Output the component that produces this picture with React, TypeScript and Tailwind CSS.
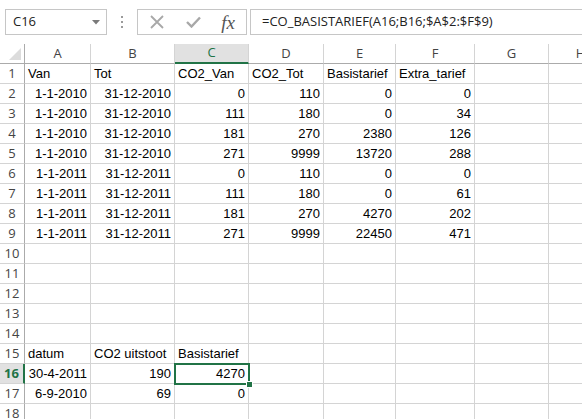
import React from "react";

const cols = ["A", "B", "C", "D", "E", "F", "G", "H"];
const widths = "25px 66px 84px 74px 75px 72px 79px 74px 64px";

type Cell = { v: string; left?: boolean };

const L = (v: string): Cell => ({ v, left: true });
const R = (v: string): Cell => ({ v });

const dataRows: Record<number, Cell[]> = {
  1: [L("Van"), L("Tot"), L("CO2_Van"), L("CO2_Tot"), L("Basistarief"), L("Extra_tarief")],
  2: [R("1-1-2010"), R("31-12-2010"), R("0"), R("110"), R("0"), R("0")],
  3: [R("1-1-2010"), R("31-12-2010"), R("111"), R("180"), R("0"), R("34")],
  4: [R("1-1-2010"), R("31-12-2010"), R("181"), R("270"), R("2380"), R("126")],
  5: [R("1-1-2010"), R("31-12-2010"), R("271"), R("9999"), R("13720"), R("288")],
  6: [R("1-1-2011"), R("31-12-2011"), R("0"), R("110"), R("0"), R("0")],
  7: [R("1-1-2011"), R("31-12-2011"), R("111"), R("180"), R("0"), R("61")],
  8: [R("1-1-2011"), R("31-12-2011"), R("181"), R("270"), R("4270"), R("202")],
  9: [R("1-1-2011"), R("31-12-2011"), R("271"), R("9999"), R("22450"), R("471")],
  15: [L("datum"), L("CO2 uitstoot"), L("Basistarief")],
  16: [R("30-4-2011"), R("190"), R("4270")],
  17: [R("6-9-2010"), R("69"), R("0")],
};

const ui = { fontFamily: '"Open Sans", "Noto Sans", sans-serif' };
const cellFont = { fontFamily: '"Liberation Sans", Arial, sans-serif' };

function Toolbar() {
  return (
    <div className="flex h-[44px] items-start pt-[9px] bg-white" style={ui}>
      <div className="ml-[5px] flex h-[26px] w-[102px] items-center justify-between border border-[#c6c6c6] pl-[7px] pr-[6px] text-[13px] text-[#222]">
        <span>C16</span>
        <svg width="8" height="5" viewBox="0 0 8 5">
          <path d="M0 0 L8 0 L4 4.5 Z" fill="#7a7a7a" />
        </svg>
      </div>
      <div className="flex h-[26px] w-[30px] flex-col items-center justify-center gap-[3px]">
        <span className="h-[2px] w-[2px] bg-[#9a9a9a]" />
        <span className="h-[2px] w-[2px] bg-[#9a9a9a]" />
        <span className="h-[2px] w-[2px] bg-[#9a9a9a]" />
      </div>
      <div className="flex h-[26px] w-[110px] items-center border border-[#c6c6c6]">
        <div className="flex w-[38px] justify-center">
          <svg width="14" height="14" viewBox="0 0 14 14">
            <path d="M1 1 L13 13 M13 1 L1 13" stroke="#a8a8a8" strokeWidth="1.8" />
          </svg>
        </div>
        <div className="flex w-[34px] justify-center">
          <svg width="15" height="12" viewBox="0 0 15 12">
            <path d="M1 6 L5.5 10.5 L14 1.5" stroke="#a8a8a8" strokeWidth="2.4" fill="none" />
          </svg>
        </div>
        <div className="flex w-[36px] justify-center">
          <span
            className="text-[19px] italic leading-none text-[#555]"
            style={{ fontFamily: '"Liberation Serif", "DejaVu Serif", serif' }}
          >
            fx
          </span>
        </div>
      </div>
      <div className="ml-[3px] flex h-[26px] flex-1 items-center border-y border-l border-[#c6c6c6] pl-[11px] text-[13px] text-[#222]">
        =CO_BASISTARIEF(A16;B16;$A$2:$F$9)
      </div>
    </div>
  );
}

function Sheet() {
  const rows = Array.from({ length: 18 }, (_, i) => i + 1);
  return (
    <div className="grid w-[613px]" style={{ gridTemplateColumns: widths }}>
      <div className="flex h-[20px] items-end justify-end border-b border-r border-[#ababab] pb-[3px] pr-[3px]">
        <svg width="12" height="12" viewBox="0 0 12 12">
          <path d="M12 0 L12 12 L0 12 Z" fill="#dcdcdc" />
        </svg>
      </div>
      {cols.map((c) => {
        const sel = c === "C";
        return (
          <div
            key={c}
            className={
              sel
                ? "flex h-[20px] items-center justify-center border-b-2 border-r border-b-[#217346] border-r-[#d4d4d4] bg-[#e1e1e1] text-[13px] text-[#217346]"
                : "flex h-[20px] items-center justify-center border-b border-r border-b-[#ababab] border-r-[#d4d4d4] text-[13px] text-[#444]"
            }
            style={ui}
          >
            {c}
          </div>
        );
      })}
      {rows.map((r) => {
        const data = dataRows[r] || [];
        const selRow = r === 16;
        return (
          <React.Fragment key={r}>
            <div
              className={
                selRow
                  ? "flex h-[20px] items-center justify-center border-b border-r-2 border-b-[#d4d4d4] border-r-[#217346] bg-[#e1e1e1] text-[13px] font-bold text-[#217346]"
                  : "flex h-[20px] items-center justify-center border-b border-r border-b-[#d4d4d4] border-r-[#ababab] text-[13px] text-[#444]"
              }
              style={ui}
            >
              {r}
            </div>
            {cols.map((c, ci) => {
              const cell = data[ci];
              const active = selRow && c === "C";
              return (
                <div
                  key={c}
                  className={
                    "relative flex h-[20px] items-center whitespace-nowrap border-b border-r border-[#d4d4d4] px-[3px] text-[13px] text-black " +
                    (cell && cell.left ? "justify-start" : "justify-end") +
                    (active ? " z-10" : "")
                  }
                  style={cellFont}
                >
                  {cell ? cell.v : ""}
                  {active && (
                    <>
                      <div className="pointer-events-none absolute left-[-1px] top-[-1px] h-[22px] w-[76px] border-2 border-[#217346]" />
                      <div className="absolute bottom-[-5px] right-[-5px] h-[7px] w-[7px] border border-white bg-[#217346]" />
                    </>
                  )}
                </div>
              );
            })}
          </React.Fragment>
        );
      })}
    </div>
  );
}

export default function App() {
  return (
    <div className="h-[419px] w-[582px] overflow-hidden bg-white">
      <Toolbar />
      <Sheet />
    </div>
  );
}
